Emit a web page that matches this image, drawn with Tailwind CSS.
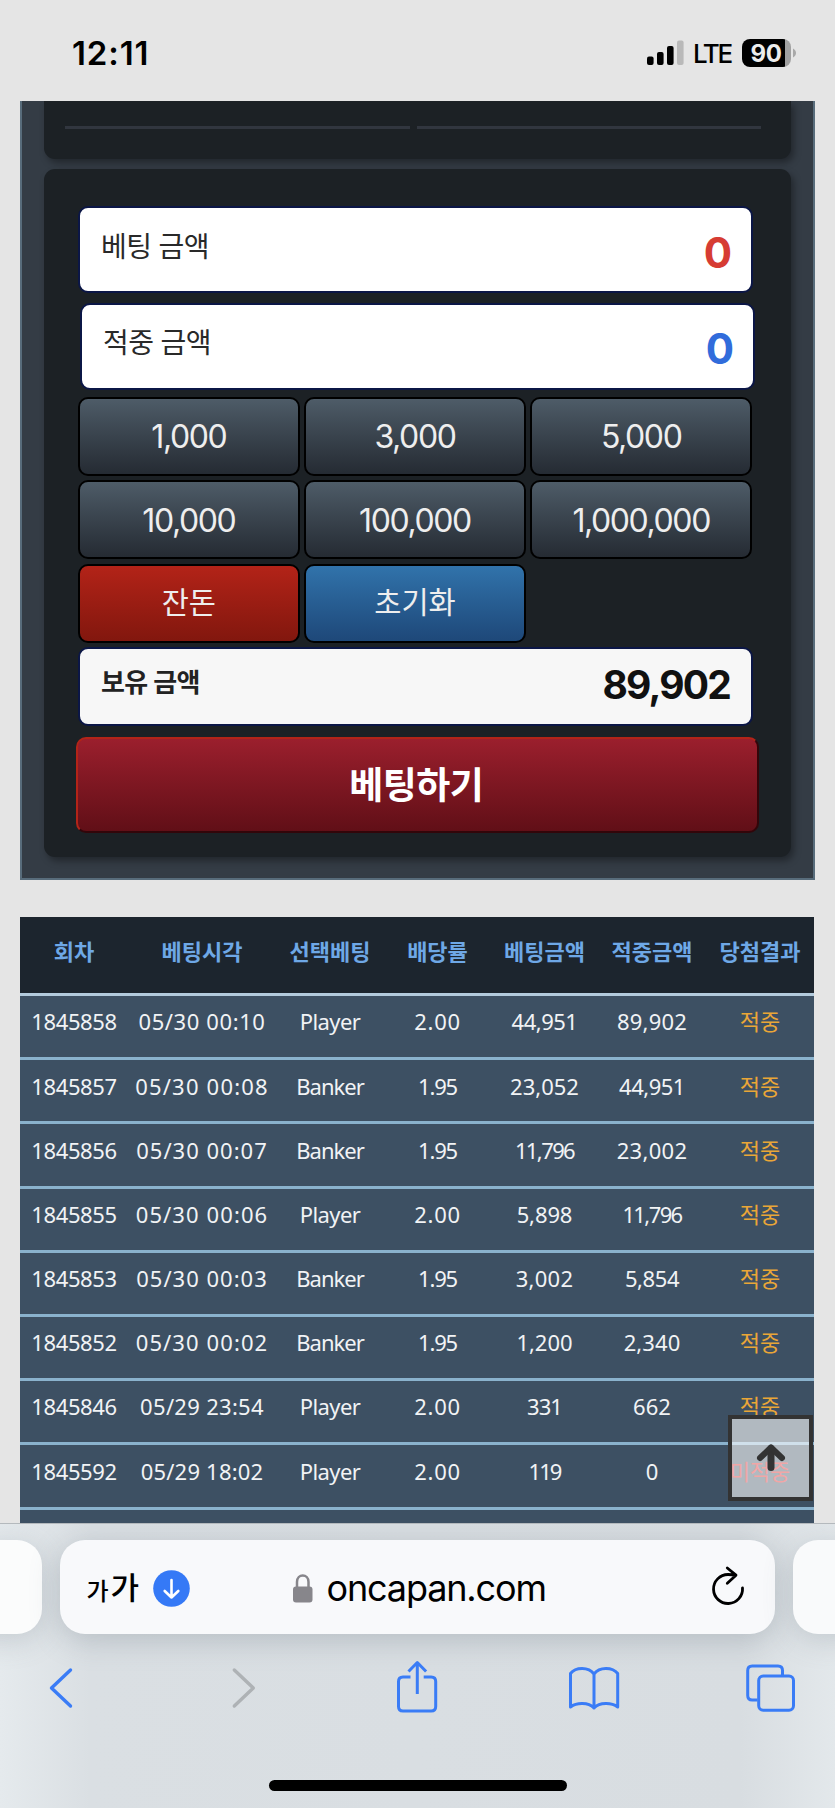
<!DOCTYPE html>
<html lang="ko">
<head>
<meta charset="utf-8">
<meta name="viewport" content="width=device-width, initial-scale=1">
<title>oncapan.com</title>
<script src="https://cdn.jsdelivr.net/npm/@tailwindcss/browser@4"></script>
</head>
<body class="bg-[#e5e5e5]">
<div class="flex h-[1808px] w-[835px] flex-col overflow-hidden bg-[#e5e5e5] font-['Inter','Noto_Sans_CJK_KR',sans-serif]">

  <!-- Status bar -->
  <header class="flex h-[100.500px] shrink-0 items-center justify-between pt-[6px] pr-[38px] pl-[72px]">
    <div class="text-[33px] leading-none font-semibold tracking-[0.900px] text-black">12:11</div>
    <div class="flex items-center">
      <svg class="h-[26px] w-[38px]" viewBox="0 0 38 26">
        <rect x="0" y="16.500" width="6.600" height="8.500" rx="2"/>
        <rect x="10" y="12" width="6.600" height="13" rx="2"/>
        <rect x="20" y="6" width="6.600" height="19" rx="2"/>
        <rect x="30" y="0.500" width="6.600" height="24.500" rx="2" fill="#b9b9b9"/>
      </svg>
      <div class="mt-[2px] ml-[8px] w-[38px] text-[26px] leading-none font-medium tracking-[-2.400px] whitespace-nowrap">LTE</div>
      <div class="ml-[11px] flex h-[28px] w-[49px] items-center justify-center rounded-[8px] bg-[linear-gradient(to_right,#000_43.5px,#a1a1a1_43.5px)] text-[24px] leading-none font-bold tracking-[-0.300px] text-[#ececec]"><span class="pt-px pr-px">90</span></div>
      <svg class="ml-[2px] h-[10px] w-[4px]" viewBox="0 0 4 10"><path d="M0 .5C4 2.500 4 7.500 0 9.500z" fill="#a8a8a8"/></svg>
    </div>
  </header>

  <main class="flex h-[1422.500px] shrink-0 flex-col overflow-hidden pr-[20.500px] pl-[20px]">
    <!-- Betting panel -->
    <section class="h-[779.500px] shrink-0 border-x-2 border-b-2 border-[#586c7b] bg-[#343c45] pr-[21.500px] pl-[21.500px]">
      <div class="flex h-[58.500px] gap-[7px] rounded-b-[11px] bg-[#1c2125] px-[21.500px] pt-[25.500px] shadow-[3px_4px_7px_rgba(0,0,0,0.35)]">
        <div class="h-[2.500px] w-[345px] bg-[#31363f]"></div>
        <div class="h-[2.500px] w-[344px] bg-[#31363f]"></div>
      </div>
      <div class="mt-[10px] h-[688px] rounded-[11px] bg-[#1c2125] pt-[37px] pl-[34.500px] shadow-[3px_4px_7px_rgba(0,0,0,0.35)]">
        <div class="flex h-[87px] w-[675px] items-center justify-between rounded-[10px] border-2 border-[#0b1646] bg-white pr-[20px] pl-[21px]">
          <span class="pb-[6px] text-[28px] leading-none tracking-[-0.600px] text-[#292929]">베팅 금액</span>
          <span class="pt-[6px] text-[42px] leading-none font-bold tracking-[-1px] text-[#d63c33]">0</span>
        </div>
        <div class="mt-[9.500px] ml-[2px] flex h-[87px] w-[675px] items-center justify-between rounded-[10px] border-2 border-[#0b1646] bg-white pr-[20px] pl-[21px]">
          <span class="pb-[6px] text-[28px] leading-none tracking-[-0.600px] text-[#292929]">적중 금액</span>
          <span class="pt-[6px] text-[42px] leading-none font-bold tracking-[-1px] text-[#316cdb]">0</span>
        </div>
        <div class="mt-[7px] grid w-[674px] grid-cols-3 gap-x-[4.500px] gap-y-[4.600px] text-[32px] leading-none font-normal tracking-[-1.400px] text-[#eeeeee]">
          <button class="h-[79px] rounded-[10px] border-2 border-black bg-linear-to-b from-[#4e5c68] to-[#252b33] pt-[2px]">1,000</button>
          <button class="h-[79px] rounded-[10px] border-2 border-black bg-linear-to-b from-[#4e5c68] to-[#252b33] pt-[2px]">3,000</button>
          <button class="h-[79px] rounded-[10px] border-2 border-black bg-linear-to-b from-[#4e5c68] to-[#252b33] pt-[2px]">5,000</button>
          <button class="h-[79px] rounded-[10px] border-2 border-black bg-linear-to-b from-[#4e5c68] to-[#252b33] pt-[2px]">10,000</button>
          <button class="h-[79px] rounded-[10px] border-2 border-black bg-linear-to-b from-[#4e5c68] to-[#252b33] pt-[2px]">100,000</button>
          <button class="h-[79px] rounded-[10px] border-2 border-black bg-linear-to-b from-[#4e5c68] to-[#252b33] pt-[2px]">1,000,000</button>
          <button class="h-[79px] rounded-[10px] border-2 border-black bg-linear-to-b from-[#b32318] to-[#82170e] text-[29.500px] tracking-normal">잔돈</button>
          <button class="h-[79px] rounded-[10px] border-2 border-black bg-linear-to-b from-[#3173ab] to-[#1e4879] text-[29.500px] tracking-normal">초기화</button>
        </div>
        <div class="mt-[4.500px] flex h-[79px] w-[675px] items-center justify-between rounded-[10px] border-2 border-[#0b1646] bg-[#f7f7f7] pr-[21px] pl-[21px]">
          <span class="pb-[8px] text-[26px] leading-none font-semibold tracking-[-0.700px] text-[#222]">보유 금액</span>
          <span class="pb-[4px] text-[39px] leading-none font-bold tracking-[-1.800px] text-[#111]">89,902</span>
        </div>
        <button class="mt-[10.500px] -ml-[2px] flex h-[96px] w-[682.500px] items-center justify-center rounded-[10px] border-2 border-t-[#b32418] border-r-[#32060a] border-b-[#32060a] border-l-[#b32418] bg-linear-to-b from-[#9b1f2d] to-[#610f17] pt-[2px] pr-[2px] text-[37px] leading-none font-bold tracking-[-0.500px] text-white">베팅하기</button>
      </div>
    </section>

    <!-- Betting history -->
    <section class="mt-[36.500px] h-[700px] w-[794px] shrink-0 bg-[#3d5063] font-['Noto_Sans','Noto_Sans_CJK_KR',sans-serif] text-[22px] leading-none text-[#f1f3f5]">
      <div class="grid h-[79.500px] grid-cols-[108px_148px_108px_107px_107px_108px_108px] items-center border-b-[3.500px] border-[#b3cbdd] bg-[#1c252e] pb-[10px] text-center font-['Noto_Sans_CJK_KR',sans-serif] font-bold text-[#6ea8e6]">
        <span>회차</span><span>베팅시각</span><span>선택베팅</span><span>배당률</span><span>베팅금액</span><span>적중금액</span><span>당첨결과</span>
      </div>
      <div id="rows"></div>
    </section>
  </main>

  <!-- Browser chrome -->
  <footer class="flex h-[285px] shrink-0 flex-col overflow-hidden border-t border-[#b4b9bd] bg-[linear-gradient(to_right,#e5eaed_0px,#dadfe3_90px,#d8dde1_740px,#e3e8eb_835px)]">
    <div class="mt-[16px] -ml-[40.500px] flex h-[94px] w-[915px] shrink-0 gap-[18px]">
      <div class="w-[82px] shrink-0 rounded-[25px] bg-[#fbfcfc] shadow-[0_6px_30px_rgba(90,105,115,0.24)]"></div>
      <div class="flex w-[715px] shrink-0 items-center rounded-[25px] bg-[#f8f9fb] pt-[2px] pl-[27px] text-black shadow-[0_6px_30px_rgba(90,105,115,0.28)]">
        <div class="mb-[2px] flex h-[34px] w-[55px] items-end font-['Noto_Sans_CJK_KR',sans-serif] font-medium">
          <span class="w-[24px] text-[24px] leading-[28px]">가</span><span class="text-[31px] leading-[36px]">가</span>
        </div>
        <svg class="ml-[11px] h-[37px] w-[37px]" viewBox="0 0 37 37" fill="none" stroke="#fff" stroke-width="2.600" stroke-linecap="round" stroke-linejoin="round"><circle cx="18.500" cy="18.500" r="18.300" fill="#3579f6" stroke="none"/><path d="M18.500 10v17.500M11.700 21l6.800 6.500 6.800-6.500"/></svg>
        <svg class="ml-[103px] h-[29px] w-[20px]" viewBox="0 0 20 29" fill="none"><rect x="0" y="12.500" width="19.500" height="16" rx="3" fill="#87868b"/><path d="M4 13V8c0-8.600 11.500-8.600 11.500 0v5" stroke="#87868b" stroke-width="2.500"/></svg>
        <span class="ml-[14px] w-[222px] text-[36px] leading-none tracking-[-1.150px] whitespace-nowrap">oncapan.com</span>
        <svg class="mb-[7px] ml-[161px] h-[42px] w-[36px]" viewBox="0 0 36 42" fill="none" stroke="#000" stroke-width="2.800" stroke-linecap="round" stroke-linejoin="round"><path d="M32.500 24A14.500 14.500 0 1 1 18 10.500c2.800 0 5 .2 7.500.7M17.300 4l8.700 7.200-8.700 8"/></svg>
      </div>
      <div class="w-[82px] shrink-0 rounded-[25px] bg-[#f9fafb] shadow-[0_6px_30px_rgba(90,105,115,0.24)]"></div>
    </div>
    <nav class="mt-[26px] flex shrink-0 justify-between pr-[41px] pl-[36px]">
      <svg class="h-[56px] w-[48px]" viewBox="36 1660 48 56" fill="none" stroke="#3a7cf6" stroke-width="3.400" stroke-linecap="round" stroke-linejoin="round"><path d="M70.500 1670 51.500 1688l19 18"/></svg>
      <svg class="h-[56px] w-[48px]" viewBox="213.500 1660 48 56" fill="none" stroke="#aeb2b5" stroke-width="3.400" stroke-linecap="round" stroke-linejoin="round"><path d="M233.800 1670l19 18-19 18"/></svg>
      <svg class="h-[56px] w-[48px]" viewBox="391.500 1660 48 56" fill="none" stroke="#3a7cf6" stroke-width="3" stroke-linejoin="round"><path d="M411 1677h-7.500q-4.500 0-4.500 4.500v25q0 4.500 4.500 4.500h28.200q4.500 0 4.500-4.500v-25q0-4.500-4.500-4.500h-7.500"/><path d="M417.800 1694v-31M409 1671.500l8.800-9 8.800 9"/></svg>
      <svg class="h-[56px] w-[48px] overflow-visible" viewBox="569 1660 48 56" fill="none" stroke="#3a7cf6" stroke-width="3" stroke-linecap="round" stroke-linejoin="round"><path d="M570.500 1707v-33.500c5-6.500 18-7 23.500.5 5.500-7.500 18.500-7 23.700-.5V1707c-6-4.500-18-5-23.700 1-5.700-6-17.500-5.500-23.500-1zM594 1674v34"/></svg>
      <svg class="h-[56px] w-[48px] overflow-visible" viewBox="746.500 1660 48 56" fill="none" stroke="#3a7cf6" stroke-width="3"><path d="M758 1700h-5.300q-4.500 0-4.500-4.500v-25q0-4.500 4.500-4.500h25.800q4.500 0 4.500 4.500v5"/><rect x="759.200" y="1676" width="34.800" height="34.300" rx="4.500"/></svg>
    </nav>
    <div class="mt-[64px] ml-[268.500px] h-[11px] w-[298px] shrink-0 rounded-full bg-black"></div>
  </footer>
</div>

<!-- Scroll-to-top button floating above the table -->
<button class="absolute top-[1415px] left-[728px] flex h-[86px] w-[85px] items-center justify-center border-4 border-[#333333] bg-white/60">
  <svg class="h-[32px] w-[32px]" viewBox="0 0 32 32" fill="none" stroke="#333" stroke-linecap="round" stroke-linejoin="round"><path d="M16 6.500v19" stroke-width="7" /><path d="M5 16 16 5.500l11 10.500" stroke-width="6"/></svg>
</button>

<script>
const rows = [
  ['1845858', '05/30 00:10', 'tracking-[0.6px]', 'Player', '2.00', '44,951', 'tracking-[-0.5px]', '89,902', 'tracking-[0.2px]', '적중'],
  ['1845857', '05/30 00:08', 'tracking-[1.2px]', 'Banker', '1.95', '23,052', 'tracking-[0px]', '44,951', 'tracking-[-0.5px]', '적중'],
  ['1845856', '05/30 00:07', 'tracking-[1px]', 'Banker', '1.95', '11,796', 'tracking-[-1.6px]', '23,002', 'tracking-[0.3px]', '적중'],
  ['1845855', '05/30 00:06', 'tracking-[1.1px]', 'Player', '2.00', '5,898', 'tracking-[-0.1px]', '11,796', 'tracking-[-1.6px]', '적중'],
  ['1845853', '05/30 00:03', 'tracking-[1px]', 'Banker', '1.95', '3,002', 'tracking-[0.3px]', '5,854', 'tracking-[-0.4px]', '적중'],
  ['1845852', '05/30 00:02', 'tracking-[1.1px]', 'Banker', '1.95', '1,200', 'tracking-[0px]', '2,340', 'tracking-[0.1px]', '적중'],
  ['1845846', '05/29 23:54', 'tracking-[0.3px]', 'Player', '2.00', '331', 'tracking-[-1px]', '662', 'tracking-[0px]', '적중'],
  ['1845592', '05/29 18:02', 'tracking-[0.2px]', 'Player', '2.00', '119', 'tracking-[-2px]', '0', 'tracking-[0px]', '미적중'],
];
document.getElementById('rows').innerHTML = rows.map(([no, time, tt, pick, odds, bet, bt, win, wt, result]) => `
  <div class="grid h-[64.2px] grid-cols-[108px_148px_108px_107px_107px_108px_108px] items-center border-b-[3px] border-[#8ab2cd] pb-[10.5px] text-center font-normal whitespace-nowrap">
    <span class="tracking-[-0.4px]">${no}</span>
    <span class="${tt}">${time}</span>
    <span class="${pick === 'Player' ? 'tracking-[-0.6px]' : 'tracking-[-1px]'}">${pick}</span>
    <span class="${odds === '2.00' ? 'tracking-[0.7px]' : 'tracking-[-1.2px]'}">${odds}</span>
    <span class="${bt}">${bet}</span>
    <span class="${wt}">${win}</span>
    <span class="pb-[2px] font-['Noto_Sans_CJK_KR',sans-serif] ${result === '적중' ? 'text-[#eaa637]' : 'text-[#dd2222]'}">${result}</span>
  </div>`).join('');
</script>
</body>
</html>
